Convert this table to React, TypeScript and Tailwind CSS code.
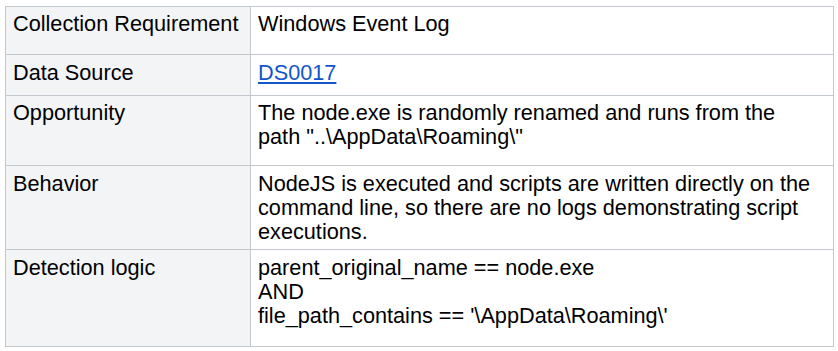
import React from "react";

const rows: { label: string; h: string; pt: string; value: React.ReactNode }[] = [
  { label: "Collection Requirement", h: "h-[48px]", pt: "pt-[5px]", value: "Windows Event Log" },
  {
    label: "Data Source",
    h: "h-[41px]",
    pt: "pt-[6px]",
    value: (
      <a href="#" className="text-[#1155cc] underline">
        DS0017
      </a>
    ),
  },
  {
    label: "Opportunity",
    h: "h-[70px]",
    pt: "pt-[5px]",
    value: 'The node.exe is randomly renamed and runs from the path "..\\AppData\\Roaming\\"',
  },
  {
    label: "Behavior",
    h: "h-[84px]",
    pt: "pt-[6px]",
    value:
      "NodeJS is executed and scripts are written directly on the command line, so there are no logs demonstrating script executions.",
  },
  {
    label: "Detection logic",
    h: "h-[97px]",
    pt: "pt-[6px]",
    value: (
      <>
        parent_original_name == node.exe
        <br />
        AND
        <br />
        file_path_contains == '\AppData\Roaming\'
      </>
    ),
  },
];

export default function App() {
  return (
    <div className="bg-white w-[838px] h-[351px] pt-[6px] pl-[5px] font-['Liberation_Sans',Arial,sans-serif] text-[21.7px] leading-[24px] text-black">
      <table className="table-fixed border-collapse w-[829px]">
        <colgroup>
          <col className="w-[245px]" />
          <col />
        </colgroup>
        <tbody>
          {rows.map((r) => (
            <tr key={r.label} className={r.h}>
              <td className={`border border-[#c3c8cf] bg-[#f3f4f6] align-top pl-[7px] ${r.pt}`}>{r.label}</td>
              <td className={`border border-[#c3c8cf] bg-white align-top pl-[7px] pr-[10px] ${r.pt}`}>{r.value}</td>
            </tr>
          ))}
        </tbody>
      </table>
    </div>
  );
}
